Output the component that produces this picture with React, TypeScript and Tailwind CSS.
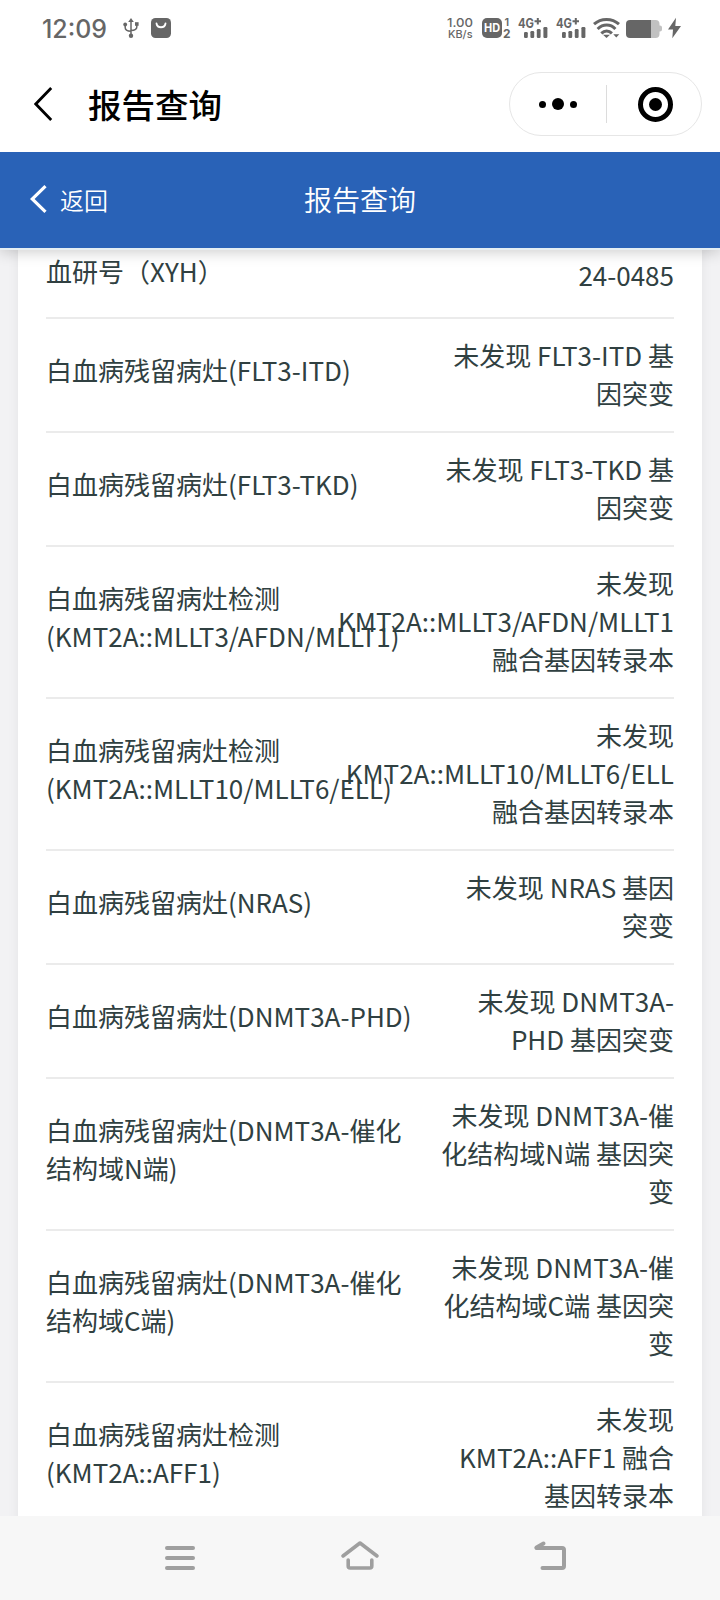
import React from 'react';

interface ReportRow {
  label: string[];
  value: string[];
}

const rows: ReportRow[] = [
  { label: ['血研号（XYH）'], value: ['24-0485'] },
  { label: ['白血病残留病灶(FLT3-ITD)'], value: ['未发现 FLT3-ITD 基', '因突变'] },
  { label: ['白血病残留病灶(FLT3-TKD)'], value: ['未发现 FLT3-TKD 基', '因突变'] },
  {
    label: ['白血病残留病灶检测', '(KMT2A::MLLT3/AFDN/MLLT1)'],
    value: ['未发现', 'KMT2A::MLLT3/AFDN/MLLT1', '融合基因转录本'],
  },
  {
    label: ['白血病残留病灶检测', '(KMT2A::MLLT10/MLLT6/ELL)'],
    value: ['未发现', 'KMT2A::MLLT10/MLLT6/ELL', '融合基因转录本'],
  },
  { label: ['白血病残留病灶(NRAS)'], value: ['未发现 NRAS 基因', '突变'] },
  { label: ['白血病残留病灶(DNMT3A-PHD)'], value: ['未发现 DNMT3A-', 'PHD 基因突变'] },
  {
    label: ['白血病残留病灶(DNMT3A-催化', '结构域N端)'],
    value: ['未发现 DNMT3A-催', '化结构域N端 基因突', '变'],
  },
  {
    label: ['白血病残留病灶(DNMT3A-催化', '结构域C端)'],
    value: ['未发现 DNMT3A-催', '化结构域C端 基因突', '变'],
  },
  {
    label: ['白血病残留病灶检测', '(KMT2A::AFF1)'],
    value: ['未发现', 'KMT2A::AFF1 融合', '基因转录本'],
  },
];

const Signal = () => (
  <svg className="overflow-visible" width="30" height="22" viewBox="0 0 30 22" fill="#666">
    <text x="0" y="10.5" fontSize="13.5" fontWeight="700" textLength="16" lengthAdjust="spacingAndGlyphs">4G</text>
    <path d="M16.5 3.2h6.5v2h-6.5zM18.8 1h2v6.4h-2z" />
    <rect x="6" y="15" width="3.8" height="6" rx="1.2" />
    <rect x="12.4" y="14" width="3.8" height="7" rx="1.2" />
    <rect x="18.8" y="12" width="3.8" height="9" rx="1.2" />
    <rect x="25.4" y="10" width="4" height="11" rx="1.2" />
  </svg>
);

const StatusBar = () => (
  <div className="flex h-14 items-start justify-between pt-[17px] pl-[42px] pr-[39px] font-[Inter,'Liberation_Sans',sans-serif] text-[#666]">
    <div className="flex items-start">
      <svg className="overflow-visible" width="66" height="22" viewBox="0 0 66 22" fill="#666">
        <text x="0" y="20.7" fontSize="25" fontWeight="500" textLength="65" lengthAdjust="spacingAndGlyphs">12:09</text>
      </svg>
      {/* usb */}
      <svg className="ml-[14px]" width="18" height="22" viewBox="0 0 18 22" fill="none" stroke="#666" strokeWidth="1.5">
        <path d="M9 4v14M3.2 7.5v3.2c0 2.2 2 3.3 5.8 3.6M14.8 7v3c0 2.2-2 3.3-5.8 3.6" />
        <path d="M9 1l2.8 4H6.2z" fill="#666" stroke="none" />
        <circle cx="9" cy="18.8" r="2.2" fill="#666" stroke="none" />
        <circle cx="3.2" cy="7.5" r="1.9" fill="#666" stroke="none" />
        <rect x="13" y="5.2" width="3.6" height="3.6" fill="#666" stroke="none" />
      </svg>
      <svg className="ml-[11px]" width="20" height="22" viewBox="0 0 20 22">
        <rect y="1" width="20" height="20" rx="4.5" fill="#666" />
        <path d="M5.5 6.5c.8 5 8.2 5 9 0" fill="none" stroke="#fff" strokeWidth="1.8" strokeLinecap="round" />
      </svg>
    </div>

    <div className="flex items-start">
      <svg className="overflow-visible" width="27" height="22" viewBox="0 0 27 22" fill="#666" fontWeight="500">
        <text x="0" y="9.8" fontSize="12" textLength="26" lengthAdjust="spacingAndGlyphs">1.00</text>
        <text x="1" y="20.6" fontSize="10.5" textLength="24.5" lengthAdjust="spacingAndGlyphs">KB/s</text>
      </svg>
      <svg className="ml-[8px] overflow-visible" width="29" height="22" viewBox="0 0 29 22" fill="#666" fontWeight="700">
        <rect y="1" width="20" height="20" rx="5" />
        <text x="2" y="15.3" fontSize="12" fill="#fff" textLength="16" lengthAdjust="spacingAndGlyphs">HD</text>
        <text x="22.5" y="9" fontSize="11" fontWeight="600">1</text>
        <text x="21" y="20.8" fontSize="11.5" textLength="7.5" lengthAdjust="spacingAndGlyphs">2</text>
      </svg>
      <div className="ml-[7px]"><Signal /></div>
      <div className="ml-[8px]"><Signal /></div>
      <svg className="ml-[7px]" width="27" height="22" viewBox="0 0 27 22" fill="none" stroke="#666" strokeWidth="3">
        <path d="M1 7.2C8 .8 19 .8 26 7.2M4.6 12C10 6.8 17.5 6.8 22.4 12M8.3 16.3c3.3-3 7.5-3 10.6 0" />
        <path d="M10 17.8h7L13.5 21zM20.3 17.2h6L23.3 20.5z" fill="#666" stroke="none" />
      </svg>
      <svg className="ml-[6px]" width="36" height="22" viewBox="0 0 36 22">
        <path d="M25 3h4.5a4 4 0 0 1 4 4v1.5h.5a2 2 0 0 1 2 2v2a2 2 0 0 1-2 2h-.5V17a4 4 0 0 1-4 4H25z" fill="#c1c1c1" />
        <path d="M4 3h21v18H4a4 4 0 0 1-4-4V7a4 4 0 0 1 4-4z" fill="#666" />
      </svg>
      <svg className="ml-[6px]" width="13" height="22" viewBox="0 0 13 22" fill="#666">
        <path d="M8 .8L0 12.4h5L4.3 21.2 13 9H7.3z" />
      </svg>
    </div>
  </div>
);

const TitleBar = () => (
  <div className="flex h-24 items-start justify-between pl-[34px] pr-[18px] pt-4">
    <div className="flex items-center">
      <svg width="19" height="34" viewBox="0 0 19 34" fill="none" stroke="#000" strokeWidth="2.8">
        <path d="M17.2 1L1.8 17l15.4 16" />
      </svg>
      <h1 className="ml-[35px] text-[33.5px] font-medium leading-[64px] text-black">报告查询</h1>
    </div>
    <div className="flex h-16 w-[193px] items-center rounded-full border border-[#e6e6e6]">
      <div className="flex w-24 items-center justify-center gap-[6px]">
        <span className="size-[7px] rounded-full bg-black" />
        <span className="size-3 rounded-full bg-black" />
        <span className="size-[7px] rounded-full bg-black" />
      </div>
      <div className="h-[38px] w-px bg-[#dcdcdc]" />
      <div className="flex flex-1 items-center justify-center pl-[3px]">
        <div className="flex size-[35px] items-center justify-center rounded-full border-[5px] border-black">
          <span className="size-[13px] rounded-full bg-black" />
        </div>
      </div>
    </div>
  </div>
);

const PageHeader = () => (
  <header className="relative z-10 grid h-[98px] shrink-0 grid-cols-3 items-center border-b-2 border-[#e4eef3] bg-[#2962b7] px-[30px] font-[350] text-white shadow-[0_2px_14px_rgba(0,0,0,0.2)]">
    <div className="flex items-center">
      <svg className="-mt-[3px]" width="17" height="28" viewBox="0 0 17 28" fill="none" stroke="#fff" strokeWidth="3.2">
        <path d="M15.5 1.2L2.2 14l13.3 12.8" />
      </svg>
      <span className="ml-[13px] text-[24px]">返回</span>
    </div>
    <span className="-mt-[2px] text-center text-[28px]">报告查询</span>
  </header>
);

const NavBar = () => (
  <nav className="flex h-[84px] shrink-0 items-start bg-[#f7f7f7] pl-[164px] pt-6">
    <svg width="32" height="32" viewBox="0 0 32 32" stroke="#9f9f9f" strokeWidth="4" strokeLinecap="round">
      <path d="M3 8h26M3 18h26M3 28h26" />
    </svg>
    <svg className="ml-36" width="40" height="32" viewBox="0 0 40 32" fill="none" stroke="#9f9f9f" strokeWidth="3.6" strokeLinecap="round" strokeLinejoin="round">
      <path d="M3 16L20 3l17 13M8.2 20v6a2 2 0 0 0 2 2h19.6a2 2 0 0 0 2-2V20" />
    </svg>
    <svg className="ml-[153px]" width="34" height="32" viewBox="0 0 34 32" fill="none" stroke="#9f9f9f" strokeWidth="4" strokeLinecap="round">
      <path d="M3.5 8h25.5a2 2 0 0 1 2 2v16a2 2 0 0 1-2 2H9.500" />
      <path d="M3.5 7.5l7-4" />
    </svg>
  </nav>
);

export default function App() {
  return (
    <div className="flex h-[1600px] w-[720px] flex-col overflow-hidden bg-white font-['Noto_Sans_CJK_SC',sans-serif]">
      <div className="relative z-20 h-[152px] shrink-0 bg-white">
        <StatusBar />
        <TitleBar />
      </div>
      <PageHeader />
      <main className="min-h-0 flex-1 overflow-hidden bg-[#f2f2f4] px-[18px]">
        <div className="-mt-[15px] bg-white px-7 shadow-[0_0_12px_rgba(0,0,0,0.06)]">
          {rows.map((row) => (
            <div
              key={row.label.join('')}
              className="flex items-center border-b-2 border-[#ebebeb] pt-[17px] pb-[19px] text-[26px] leading-[38px] whitespace-nowrap text-[#304041]"
            >
              <div className="w-3/5 pb-2">
                {row.label.map((line) => (
                  <div key={line}>{line}</div>
                ))}
              </div>
              <div className="flex w-2/5 flex-col items-end">
                {row.value.map((line) => (
                  <div key={line}>{line}</div>
                ))}
              </div>
            </div>
          ))}
        </div>
      </main>
      <NavBar />
    </div>
  );
}
